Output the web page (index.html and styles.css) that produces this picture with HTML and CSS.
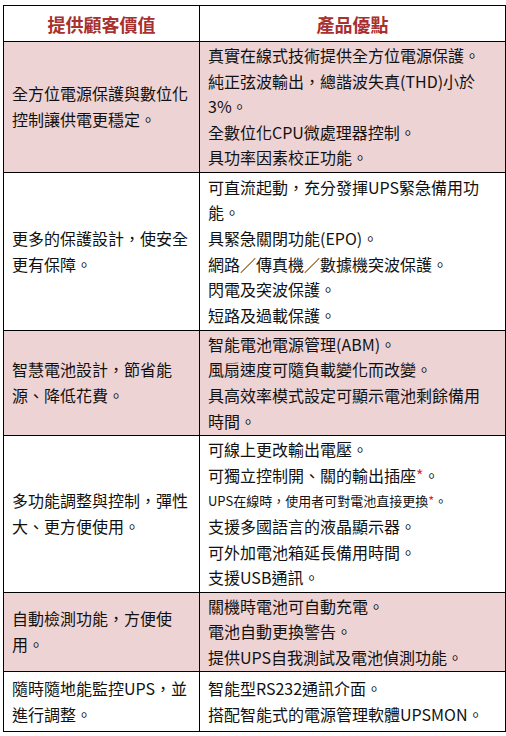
FILE: index.html
```html
<!DOCTYPE html>
<html lang="zh-Hant">
<head>
<meta charset="utf-8">
<title>UPS 產品優點</title>
<link rel="stylesheet" href="styles.css">
</head>
<body>
<table class="spec">
  <thead>
    <tr class="h-head">
      <th class="col-value">提供顧客價值</th>
      <th class="col-feature">產品優點</th>
    </tr>
  </thead>
  <tbody>
    <tr class="h-1 pink">
      <td class="value">全方位電源保護與數位化控制讓供電更穩定。</td>
      <td class="feature">
        <div>真實在線式技術提供全方位電源保護。</div>
        <div>純正弦波輸出，總諧波失真(THD)小於3%。</div>
        <div>全數位化CPU微處理器控制。</div>
        <div>具功率因素校正功能。</div>
      </td>
    </tr>
    <tr class="h-2">
      <td class="value">更多的保護設計，使安全更有保障。</td>
      <td class="feature">
        <div>可直流起動，充分發揮UPS緊急備用功能。</div>
        <div>具緊急關閉功能(EPO)。</div>
        <div>網路／傳真機／數據機突波保護。</div>
        <div>閃電及突波保護。</div>
        <div>短路及過載保護。</div>
      </td>
    </tr>
    <tr class="h-3 pink">
      <td class="value">智慧電池設計，節省能源、降低花費。</td>
      <td class="feature">
        <div>智能電池電源管理(ABM)。</div>
        <div>風扇速度可隨負載變化而改變。</div>
        <div>具高效率模式設定可顯示電池剩餘備用時間。</div>
      </td>
    </tr>
    <tr class="h-4">
      <td class="value">多功能調整與控制，彈性大、更方便使用。</td>
      <td class="feature">
        <div>可線上更改輸出電壓。</div>
        <div>可獨立控制開、關的輸出插座<span class="mark">*</span>。</div>
        <div class="small">UPS在線時，使用者可對電池直接更換<span class="mark">*</span>。</div>
        <div>支援多國語言的液晶顯示器。</div>
        <div>可外加電池箱延長備用時間。</div>
        <div>支援USB通訊。</div>
      </td>
    </tr>
    <tr class="h-5 pink">
      <td class="value">自動檢測功能，方便使用。</td>
      <td class="feature">
        <div>關機時電池可自動充電。</div>
        <div>電池自動更換警告。</div>
        <div>提供UPS自我測試及電池偵測功能。</div>
      </td>
    </tr>
    <tr class="h-6">
      <td class="value">隨時隨地能監控UPS，並進行調整。</td>
      <td class="feature">
        <div>智能型RS232通訊介面。</div>
        <div>搭配智能式的電源管理軟體UPSMON。</div>
      </td>
    </tr>
  </tbody>
</table>
</body>
</html>
```

FILE: styles.css
```css
html, body {
  margin: 0;
  padding: 0;
  background: #ffffff;
}

body {
  font-family: "Noto Sans CJK TC", "Noto Sans", sans-serif;
  font-size: 16px;
  color: #111111;
}

.spec {
  margin: 5px 0 0 3px;
  width: 501px;
  border-collapse: collapse;
  table-layout: fixed;
}

.spec th,
.spec td {
  border: 1px solid #000000;
  vertical-align: middle;
}

.spec th {
  font-size: 18px;
  font-weight: 700;
  color: #a8302f;
  text-align: center;
  line-height: 24px;
  padding: 0;
}

.col-value { width: 195px; }
.col-feature { width: 305px; }

.spec td {
  line-height: 25.6px;
  text-align: left;
}

.value {
  padding: 0 6px 0 8px;
}

.feature {
  padding: 0 16px 0 8px;
}

.pink td {
  background: #eed3d4;
}

.small {
  font-size: 13px;
}

.mark {
  color: #f0203c;
}

.h-head { height: 36px; }
.h-1 { height: 131px; }
.h-2 { height: 158px; }
.h-3 { height: 105px; }
.h-4 { height: 157px; }
.h-5 { height: 79px; }
.h-6 { height: 60px; }
```
